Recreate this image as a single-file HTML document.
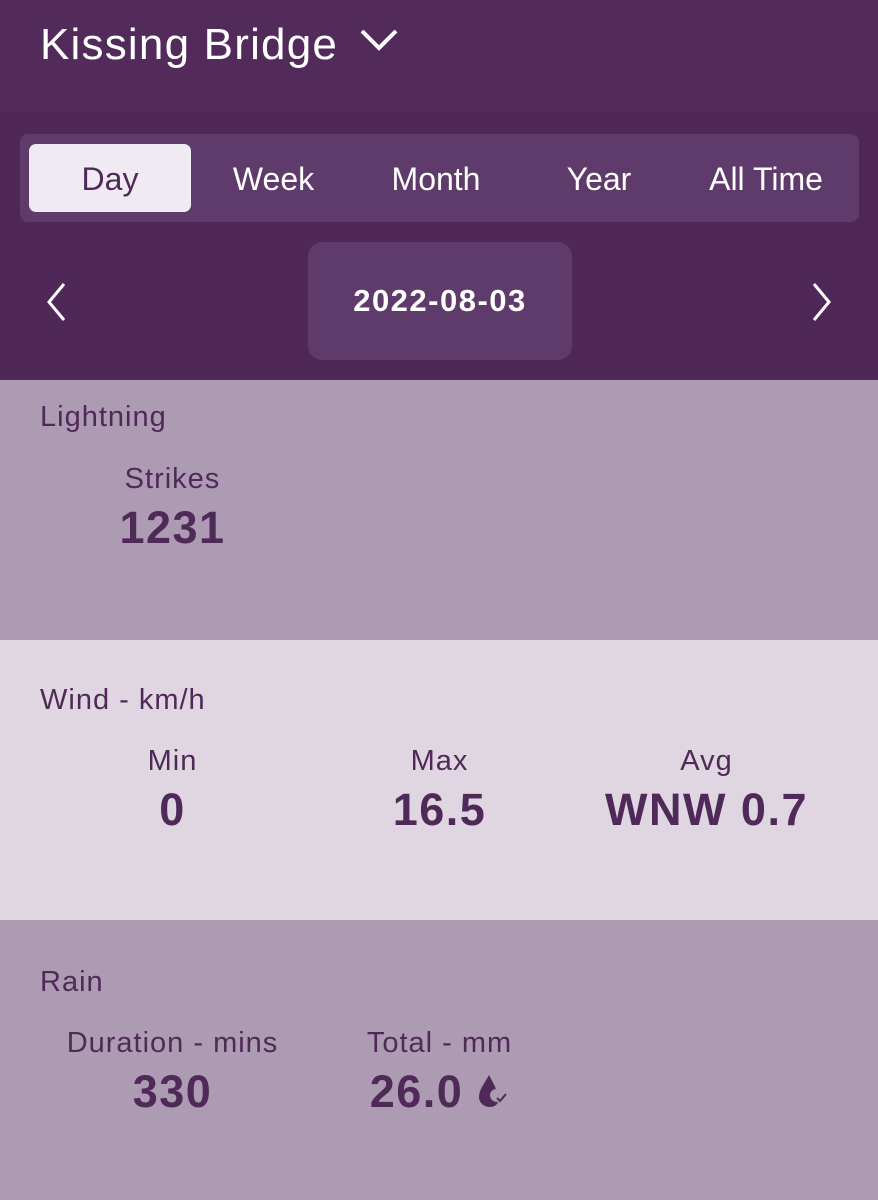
<!DOCTYPE html>
<html><head><style>
body{margin:0;width:878px;height:1200px;overflow:hidden;font-family:"Liberation Sans",sans-serif;background:#ad9bb3;}
.hdr{position:absolute;left:0;top:0;width:878px;height:112px;background:#522b5b;}
.nav{position:absolute;left:0;top:112px;width:878px;height:268px;background:#4f2857;}
.title{position:absolute;left:40px;top:20px;color:#fff;font-size:44px;letter-spacing:1.2px;}
.tabs{position:absolute;left:20px;top:134px;width:839px;height:88px;background:#5e3b6a;border-radius:8px;}
.tab{position:absolute;top:0;height:88px;line-height:90px;color:#fff;font-size:32px;text-align:center;}
.sel{position:absolute;left:9px;top:10px;width:162px;height:68px;background:#f0eaf2;border-radius:7px;}
.date{position:absolute;left:308px;top:242px;width:264px;height:118px;background:#5e3b6a;border-radius:14px;color:#fff;font-weight:bold;font-size:31px;letter-spacing:1.5px;text-align:center;line-height:118px;}
.sec{position:absolute;left:0;width:878px;height:280px;color:#4f2a58;}
.lbl{position:absolute;left:40px;font-size:29px;letter-spacing:1px;}
.col{position:absolute;width:267px;text-align:center;}
.col .k{font-size:29px;letter-spacing:1px;}
.col .v{font-size:45px;font-weight:bold;margin-top:6px;letter-spacing:1.5px;}
</style></head><body>
<div class="hdr"><div class="title">Kissing Bridge <svg width="40" height="30" viewBox="0 0 40 30" style="vertical-align:4px;margin-left:8px"><path d="M3 6 L20 23 L37 6" fill="none" stroke="#fff" stroke-width="4"/></svg></div></div>
<div class="nav"></div>
<div class="tabs">
<div class="sel"></div>
<div class="tab" style="left:9px;width:162px;color:#4f2a58">Day</div>
<div class="tab" style="left:171px;width:165px">Week</div>
<div class="tab" style="left:336px;width:160px">Month</div>
<div class="tab" style="left:496px;width:166px">Year</div>
<div class="tab" style="left:662px;width:168px">All Time</div>
</div>
<svg style="position:absolute;left:44px;top:282px" width="24" height="40" viewBox="0 0 24 40"><path d="M20 2 L5 20 L20 38" fill="none" stroke="#fff" stroke-width="3"/></svg>
<svg style="position:absolute;left:810px;top:282px" width="24" height="40" viewBox="0 0 24 40"><path d="M4 2 L19 20 L4 38" fill="none" stroke="#fff" stroke-width="3"/></svg>
<div class="date">2022-08-03</div>

<div class="sec" style="top:380px;height:260px;background:#ad9bb3">
<div class="lbl" style="top:21px">Lightning</div>
<div class="col" style="left:39px;top:83px"><div class="k">Strikes</div><div class="v">1231</div></div>
</div>
<div class="sec" style="top:640px;background:#e0d6e2">
<div class="lbl" style="top:44px">Wind - km/h</div>
<div class="col" style="left:39px;top:105px"><div class="k">Min</div><div class="v">0</div></div>
<div class="col" style="left:306px;top:105px"><div class="k">Max</div><div class="v">16.5</div></div>
<div class="col" style="left:573px;top:105px"><div class="k">Avg</div><div class="v">WNW 0.7</div></div>
</div>
<div class="sec" style="top:920px;background:#ad9bb3">
<div class="lbl" style="top:46px">Rain</div>
<div class="col" style="left:39px;top:107px"><div class="k">Duration - mins</div><div class="v">330</div></div>
<div class="col" style="left:306px;top:107px"><div class="k">Total - mm</div><div class="v">26.0 <svg width="32" height="36" viewBox="0 0 32 36" style="vertical-align:-2px"><path d="M12 2 C8 10 2 16 2 24 C2 30 7 34 13 34 C17 34 20 32 21 29 C16 29 13 26 13 22 C13 19 16 16 19 16 C17 11 14 6 12 2Z" fill="#4f2a58"/><path d="M20 25 L23 28 L29 21" fill="none" stroke="#4f2a58" stroke-width="2"/></svg></div></div>
</div>
</body></html>
